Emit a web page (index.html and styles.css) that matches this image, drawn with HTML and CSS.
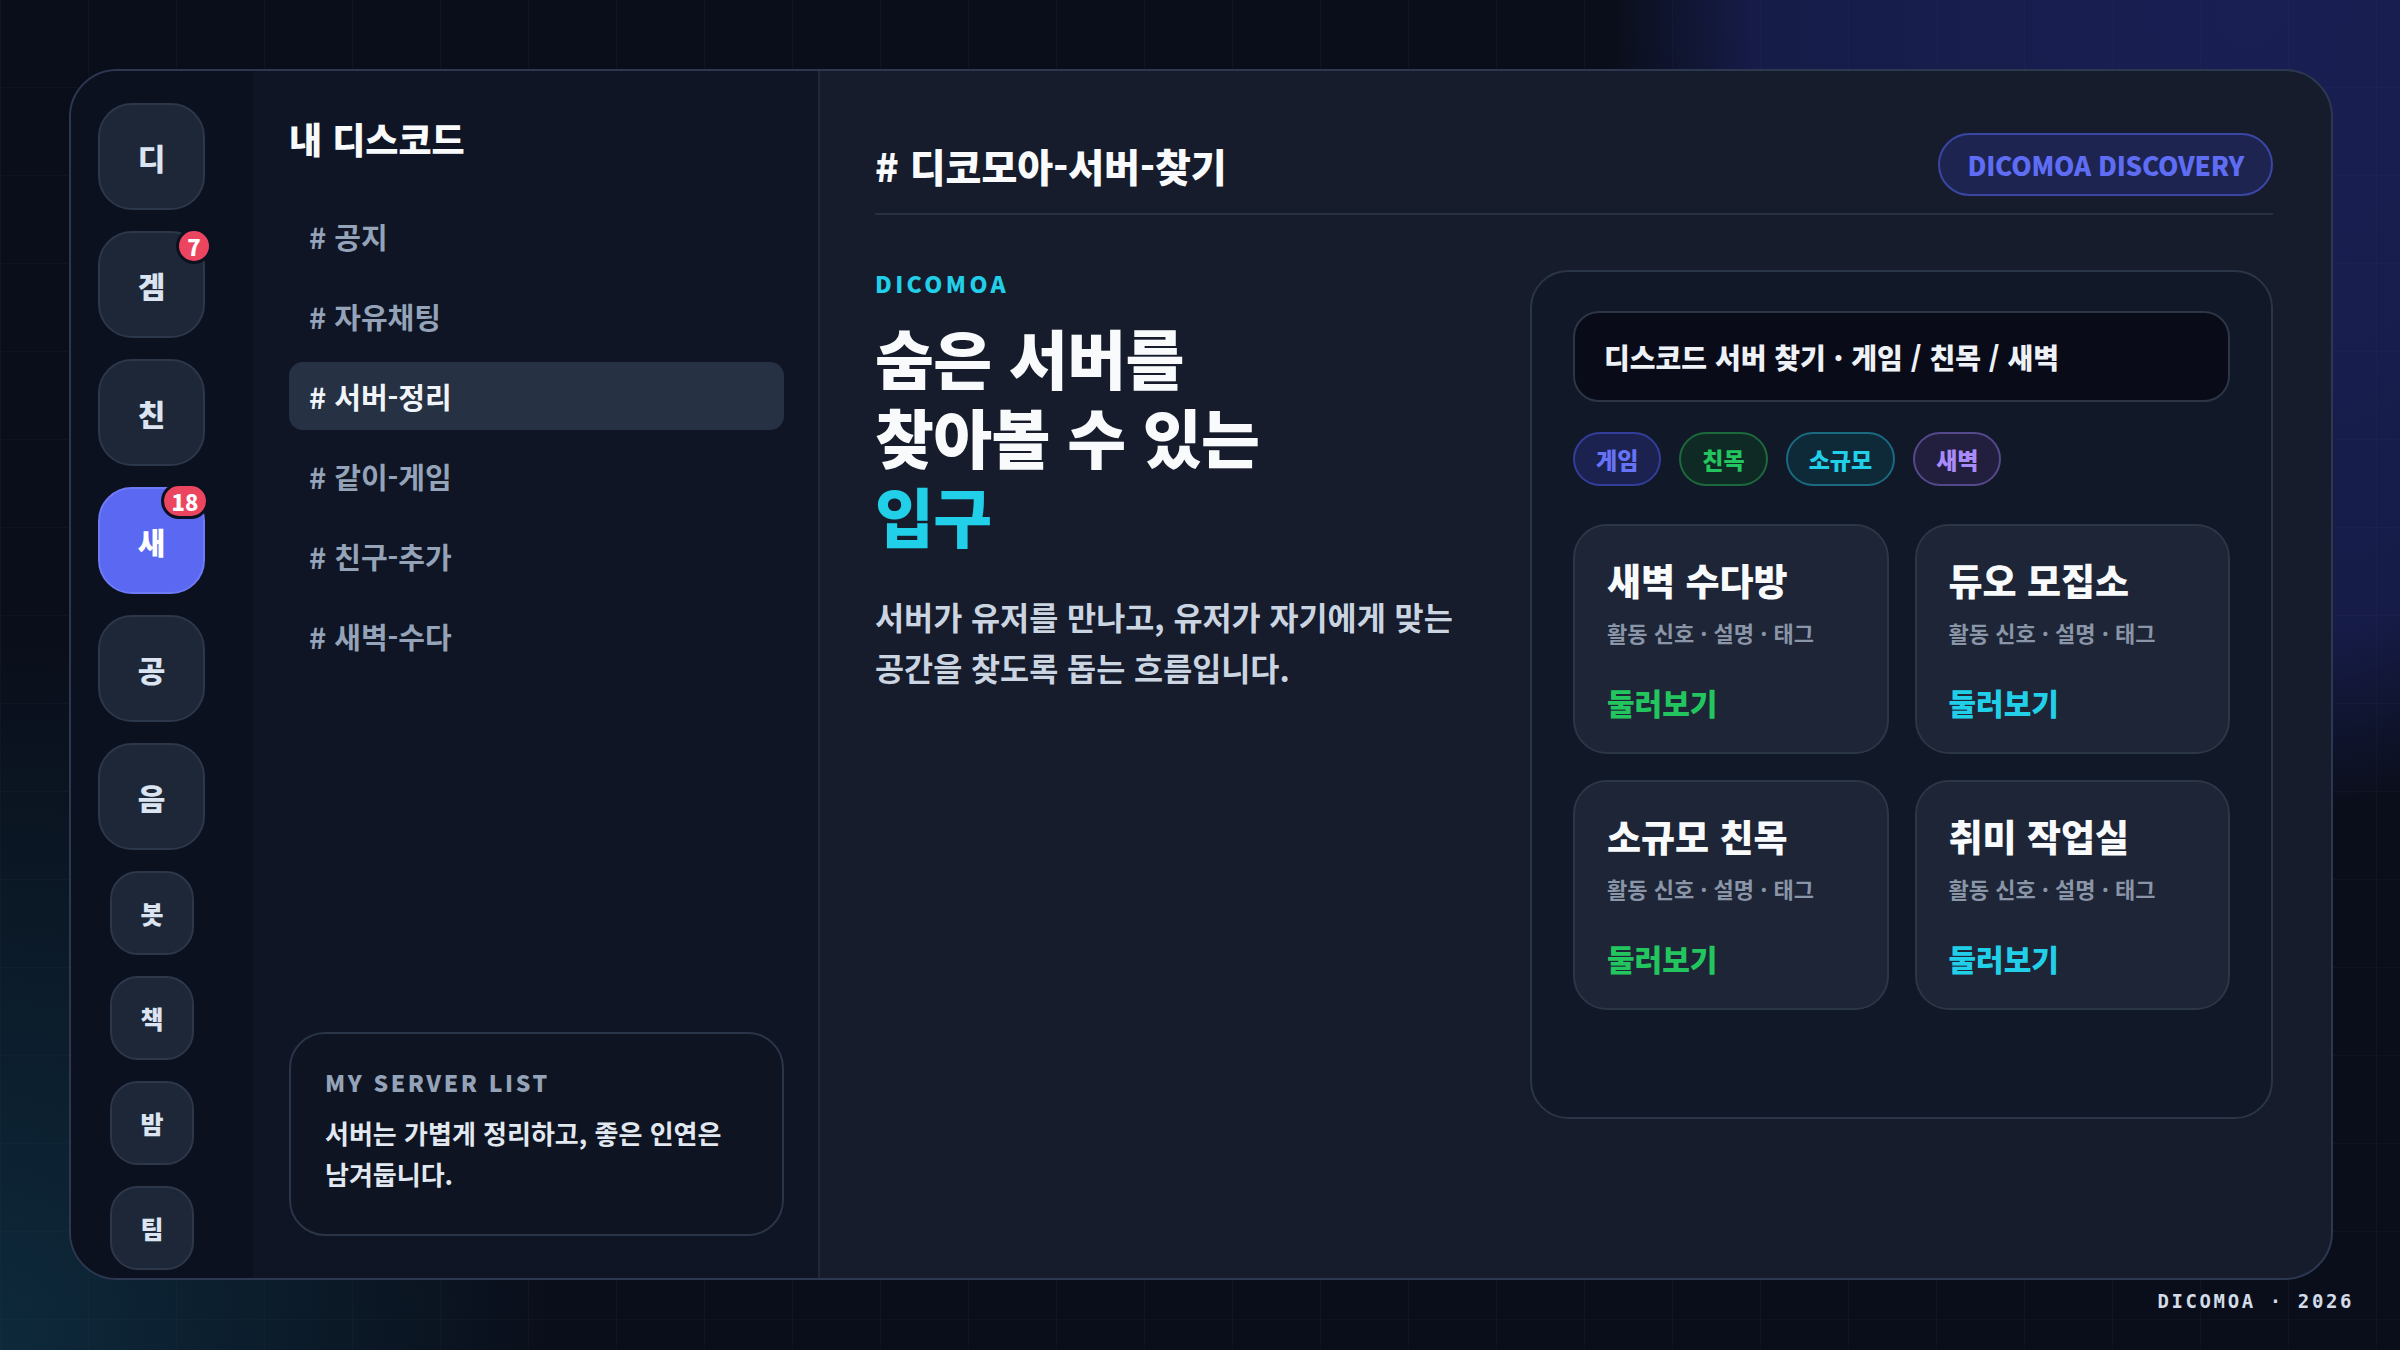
FILE: index.html
```html
<!DOCTYPE html>
<html lang="ko">
<head>
	<meta charset="UTF-8">
	<meta name="viewport" content="width=device-width, initial-scale=1.0">
	<title>디코모아</title>
	<link rel="stylesheet" href="styles.css">
</head>
<body>

	<div class="page">

		<div class="app">

			<!-- Server rail -->
			<nav class="rail">
				<div class="server">디</div>
				<div class="server">겜<span class="badge">7</span></div>
				<div class="server">친</div>
				<div class="server active">새<span class="badge wide">18</span></div>
				<div class="server">공</div>
				<div class="server">음</div>
				<div class="server small">봇</div>
				<div class="server small">책</div>
				<div class="server small">밤</div>
				<div class="server small">팀</div>
			</nav>

			<!-- Channel list -->
			<aside class="sidebar">
				<h2 class="sidebar-title">내 디스코드</h2>
				<ul class="channels">
					<li class="channel"># 공지</li>
					<li class="channel"># 자유채팅</li>
					<li class="channel active"># 서버-정리</li>
					<li class="channel"># 같이-게임</li>
					<li class="channel"># 친구-추가</li>
					<li class="channel"># 새벽-수다</li>
				</ul>
				<div class="note">
					<div class="note-label">MY SERVER LIST</div>
					<p class="note-text">서버는 가볍게 정리하고, 좋은 인연은 남겨둡니다.</p>
				</div>
			</aside>

			<!-- Main channel -->
			<main class="main">
				<header class="main-header">
					<h1 class="channel-title"># 디코모아-서버-찾기</h1>
					<span class="pill">DICOMOA DISCOVERY</span>
				</header>

				<div class="main-body">
					<section class="intro">
						<div class="eyebrow">DICOMOA</div>
						<h2 class="hero">숨은 서버를<br>찾아볼 수 있는<br><span class="accent">입구</span></h2>
						<p class="lead">서버가 유저를 만나고, 유저가 자기에게 맞는 공간을 찾도록 돕는 흐름입니다.</p>
					</section>

					<section class="finder">
						<div class="search">디스코드 서버 찾기 · 게임 / 친목 / 새벽</div>
						<div class="tags">
							<span class="tag tag-game">게임</span>
							<span class="tag tag-social">친목</span>
							<span class="tag tag-small">소규모</span>
							<span class="tag tag-night">새벽</span>
						</div>
						<div class="cards">
							<div class="card">
								<div class="card-title">새벽 수다방</div>
								<div class="card-meta">활동 신호 · 설명 · 태그</div>
								<div class="card-link green">둘러보기</div>
							</div>
							<div class="card">
								<div class="card-title">듀오 모집소</div>
								<div class="card-meta">활동 신호 · 설명 · 태그</div>
								<div class="card-link cyan">둘러보기</div>
							</div>
							<div class="card">
								<div class="card-title">소규모 친목</div>
								<div class="card-meta">활동 신호 · 설명 · 태그</div>
								<div class="card-link green">둘러보기</div>
							</div>
							<div class="card">
								<div class="card-title">취미 작업실</div>
								<div class="card-meta">활동 신호 · 설명 · 태그</div>
								<div class="card-link cyan">둘러보기</div>
							</div>
						</div>
					</section>
				</div>
			</main>

		</div>

		<footer class="footer">DICOMOA · 2026</footer>

	</div>

</body>
</html>
```

FILE: styles.css
```css
* {
	box-sizing: border-box;
}
html, body {
	margin: 0;
	padding: 0;
}
body {
	width: 2400px;
	height: 1350px;
	overflow: hidden;
	font-family: "Noto Sans CJK KR", "Noto Sans", sans-serif;
	word-break: keep-all;
	color: #e2e8f0;
	background-color: #0a0e1a;
	background-image:
		radial-gradient(ellipse 640px 820px at 2250px 0, rgba(40, 48, 140, 0.5) 0, rgba(40, 48, 140, 0.4) 78%, rgba(40, 48, 140, 0) 100%),
		radial-gradient(ellipse 560px 720px at 0 1350px, rgba(16, 64, 86, 0.55) 0, rgba(16, 64, 86, 0) 100%),
		linear-gradient(90deg, rgba(255, 255, 255, 0.022) 1px, transparent 1px),
		linear-gradient(0deg, rgba(255, 255, 255, 0.022) 1px, transparent 1px);
	background-size: auto, auto, 88px 88px, 88px 88px;
}
.page {
	padding: 69px 0 0 69px;
}

/* window */
.app {
	width: 2264px;
	height: 1211px;
	display: grid;
	grid-template-columns: 182px 567px 1fr;
	border: 2px solid #2c3850;
	border-radius: 48px;
	overflow: hidden;
	background-color: #161c2b;
}

/* server rail */
.rail {
	background-color: #0c1120;
	border-right: 2px solid #1f2838;
	padding: 32px 0 0 27px;
	display: flex;
	flex-direction: column;
	gap: 21px;
	width: 184px;
}
.server {
	position: relative;
	width: 107px;
	height: 107px;
	flex: none;
	border-radius: 34px;
	background-color: #1e2738;
	border: 2px solid #2c3749;
	display: flex;
	align-items: center;
	justify-content: center;
	font-size: 30px;
	font-weight: 800;
	color: #dbe4f0;
}
.server.small {
	width: 84px;
	height: 84px;
	margin-left: 12px;
	border-radius: 28px;
	font-size: 25px;
}
.server.active {
	background-color: #5b68f2;
	border-color: #6f7af6;
	color: #fff;
}
.badge {
	position: absolute;
	top: -5px;
	right: -9px;
	min-width: 36px;
	height: 36px;
	padding: 0 6px;
	border-radius: 18px;
	background-color: #ec4560;
	border: 3px solid #0c1120;
	color: #fff;
	font-size: 22px;
	font-weight: 800;
	line-height: 30px;
	text-align: center;
}
.badge.wide {
	top: -6px;
	right: -6px;
	min-width: 48px;
	height: 36px;
	line-height: 30px;
}

/* channel sidebar */
.sidebar {
	background-color: #0f1524;
	border-right: 2px solid #1f2838;
	padding: 44px 34px 42px 36px;
	display: flex;
	flex-direction: column;
}
.sidebar-title {
	margin: 0;
	font-size: 36px;
	line-height: 46px;
	font-weight: 800;
	color: #f8fafc;
}
.channels {
	list-style: none;
	margin: 41px 0 0;
	padding: 0;
	display: flex;
	flex-direction: column;
	gap: 12px;
}
.channel {
	height: 68px;
	padding-left: 20px;
	border-radius: 14px;
	display: flex;
	align-items: center;
	font-size: 29px;
	font-weight: 700;
	color: #94a3b8;
}
.channel.active {
	background-color: #263144;
	color: #f1f5f9;
}
.note {
	margin-top: auto;
	border: 2px solid #2a3547;
	border-radius: 36px;
	background-color: #0e1422;
	padding: 33px 34px 40px;
}
.note-label {
	font-size: 23px;
	line-height: 30px;
	font-weight: 800;
	letter-spacing: 2.6px;
	color: #94a3b8;
}
.note-text {
	margin: 15px 0 0;
	font-size: 26px;
	line-height: 41px;
	font-weight: 700;
	color: #e2e8f0;
}

/* main channel */
.main {
	padding: 62px 58px 0 55px;
}
.main-header {
	display: flex;
	justify-content: space-between;
	align-items: center;
	padding-bottom: 17px;
	border-bottom: 2px solid #273142;
}
.channel-title {
	margin: 0;
	font-size: 39px;
	font-weight: 800;
	color: #f8fafc;
}
.pill {
	height: 63px;
	padding: 0 27px;
	display: flex;
	align-items: center;
	border-radius: 32px;
	border: 2px solid #3a46a4;
	background-color: #1d2450;
	color: #5f6df5;
	font-size: 26px;
	font-weight: 800;
	letter-spacing: -0.2px;
}
.main-body {
	margin-top: 55px;
	display: grid;
	grid-template-columns: 1fr 743px;
	gap: 54px;
}
.eyebrow {
	font-size: 23px;
	line-height: 26px;
	font-weight: 800;
	letter-spacing: 3.4px;
	color: #22cfe8;
}
.hero {
	margin: 21px 0 0;
	font-size: 64px;
	line-height: 79px;
	font-weight: 800;
	letter-spacing: -0.6px;
	color: #f8fafc;
}
.hero .accent {
	color: #22cfe8;
}
.lead {
	margin: 37px 0 0;
	font-size: 31.6px;
	line-height: 51px;
	font-weight: 700;
	color: #cbd5e1;
}

/* discovery panel */
.finder {
	height: 849px;
	border: 2px solid #2a3547;
	border-radius: 38px;
	background-color: #111827;
	padding: 39px 41px;
}
.search {
	height: 91px;
	border: 2px solid #2c3647;
	border-radius: 26px;
	background-color: #090c18;
	padding-left: 29px;
	display: flex;
	align-items: center;
	font-size: 28px;
	font-weight: 800;
	color: #eef2f7;
}
.tags {
	margin-top: 30px;
	display: flex;
	gap: 18px;
}
.tag {
	height: 54px;
	padding: 0 21px;
	border-radius: 27px;
	border: 2px solid;
	display: flex;
	align-items: center;
	font-size: 23px;
	font-weight: 800;
}
.tag-game {
	color: #6673f6;
	background-color: #1c2250;
	border-color: #343e9a;
}
.tag-social {
	color: #22c55e;
	background-color: #0f2a24;
	border-color: #1c6a3c;
}
.tag-small {
	color: #22cfe8;
	background-color: #0e2938;
	border-color: #1a6a80;
}
.tag-night {
	color: #a98bfa;
	background-color: #221f3e;
	border-color: #55498c;
}
.cards {
	margin-top: 38px;
	display: grid;
	grid-template-columns: 1fr 1fr;
	gap: 26px;
}
.card {
	height: 230px;
	border: 2px solid #2b3647;
	border-radius: 34px;
	background-color: #1d2536;
	padding: 31px 32px 0;
}
.card-title {
	font-size: 37px;
	line-height: 46px;
	font-weight: 800;
	color: #f8fafc;
}
.card-meta {
	margin-top: 15px;
	font-size: 22px;
	line-height: 28px;
	font-weight: 700;
	color: #8a95a8;
}
.card-link {
	margin-top: 36px;
	font-size: 30px;
	line-height: 40px;
	font-weight: 800;
}
.card-link.green {
	color: #22c55e;
}
.card-link.cyan {
	color: #22cfe8;
}

.footer {
	margin-top: 9px;
	margin-left: -69px;
	padding-right: 46px;
	text-align: right;
	font-family: "DejaVu Sans Mono", monospace;
	font-size: 19px;
	line-height: 24px;
	font-weight: 700;
	letter-spacing: 2.6px;
	color: #d3dce8;
}
```
